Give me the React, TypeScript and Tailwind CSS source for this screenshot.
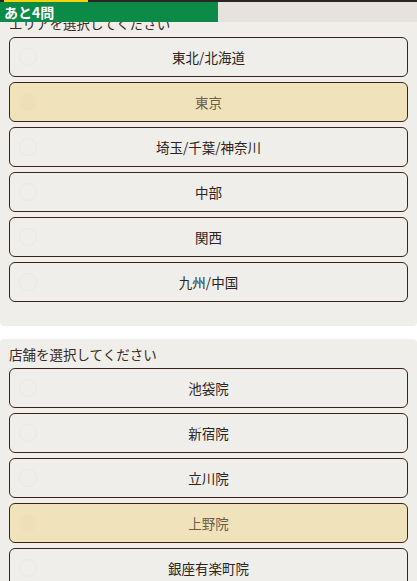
const areas = ['東北/北海道', '東京', '埼玉/千葉/神奈川', '中部', '関西', '九州/中国'];
const shops = ['池袋院', '新宿院', '立川院', '上野院', '銀座有楽町院'];

function Option({ label, selected }: { label: string; selected?: boolean }) {
  return (
    <div
      className={`relative h-10 flex items-center justify-center rounded-md border border-[#3b2417] text-[13.5px] ${
        selected ? 'bg-[#f0e3bc] text-[#6e5b48]' : 'bg-[#f0eeea] text-[#2a2522]'
      }`}
    >
      <span
        className={`absolute left-[9px] top-1/2 -translate-y-1/2 w-[18px] h-[18px] rounded-full ${
          selected ? 'bg-[#eedfb8]' : 'border border-[#ebe8e4]'
        }`}
      />
      {label}
    </div>
  );
}

function Section({ title, items, selected }: { title: string; items: string[]; selected: string }) {
  return (
    <section className="bg-[#f0eeea] rounded-[4px] px-[9px] pt-[7px] pb-[24px]">
      <div className="text-[13.5px] leading-[17px] text-[#3a2a20] mb-[5px]">{title}</div>
      <div className="flex flex-col gap-[5px]">
        {items.map((item) => (
          <Option key={item} label={item} selected={item === selected} />
        ))}
      </div>
    </section>
  );
}

export default function App() {
  return (
    <main
      className="relative min-h-screen bg-white pt-[8px] overflow-hidden"
      style={{ fontFamily: '"Noto Sans CJK JP", "Noto Sans", sans-serif' }}
    >
      {/* Progress header */}
      <header className="absolute top-0 left-0 w-full z-10">
        <div className="h-[2px] bg-[#2a2522] relative">
          <div className="absolute left-[4px] top-0 h-[2px] w-[84px] bg-[#f5d20a]" />
        </div>
        <div className="h-[20px] bg-[#e6e3df]">
          <div className="h-full w-[218px] bg-[#0b8a48] text-white text-[14px] font-bold leading-[20px] pl-[4px]">
            あと4問
          </div>
        </div>
      </header>

      <div className="flex flex-col gap-[13px]">
        <Section title="エリアを選択してください" items={areas} selected="東京" />
        <Section title="店舗を選択してください" items={shops} selected="上野院" />
      </div>
    </main>
  );
}
